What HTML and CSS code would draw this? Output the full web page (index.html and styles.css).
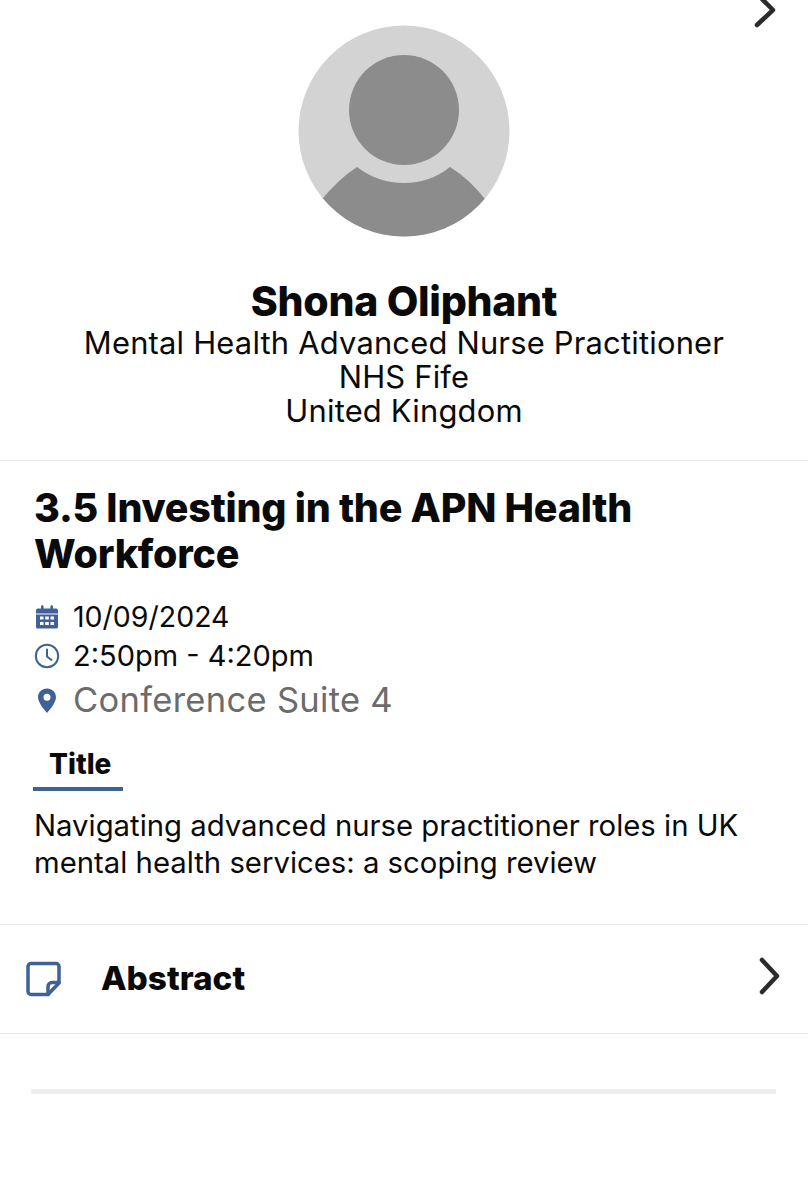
FILE: index.html
```html
<!DOCTYPE html>
<html lang="en">
<head>
  <meta charset="UTF-8">
  <meta name="viewport" content="width=device-width, initial-scale=1.0">
  <title>Shona Oliphant</title>
  <link rel="stylesheet" href="styles.css">
</head>
<body>
  <!-- Speaker -->
  <header class="speaker">
    <svg class="next-top" width="40" height="32" viewBox="0 0 40 32" fill="none">
      <path d="M5 -6 L21 10 L5 25" stroke="#2b2b2b" stroke-width="4.500" stroke-linecap="round" stroke-linejoin="round"/>
    </svg>
    <svg class="avatar" width="212" height="212" viewBox="0 0 212 212">
      <clipPath id="avatar-clip"><circle cx="106" cy="106" r="105.5"/></clipPath>
      <circle cx="106" cy="106" r="105.5" fill="#d3d3d3"/>
      <circle cx="106" cy="85" r="55" fill="#8c8c8c"/>
      <path clip-path="url(#avatar-clip)" d="M20 179 Q40 154 59 142 Q80 158 106 158 Q132 158 152 142 Q172 154 191 179 V212 H20 Z" fill="#8c8c8c"/>
    </svg>
    <h1 class="name">Shona Oliphant</h1>
    <p class="line">Mental Health Advanced Nurse Practitioner</p>
    <p class="line">NHS Fife</p>
    <p class="line">United Kingdom</p>
  </header>

  <!-- Session -->
  <section class="session">
    <h2 class="session-title">3.5 Investing in the APN Health Workforce</h2>
    <div class="meta meta-date">
      <svg class="meta-icon" width="26" height="26" viewBox="0 0 26 26">
        <path d="M2 6.5a2 2 0 0 1 2-2h3V2.5a1.3 1.3 0 0 1 2.6 0v2h6.8v-2a1.3 1.3 0 0 1 2.6 0v2h3a2 2 0 0 1 2 2v3H2z" fill="#3f6198"/>
        <path fill-rule="evenodd" d="M2 10.5h22V23a1.5 1.5 0 0 1-1.5 1.5h-19A1.5 1.5 0 0 1 2 23z M6 12.5v3h3.5v-3z M11.2 12.5v3h3.6v-3z M16.5 12.5v3H20v-3z M6 18v3h3.5v-3z M11.2 18v3h3.6v-3z M16.5 18v3H20v-3z" fill="#3f6198"/>
      </svg>
      <span>10/09/2024</span>
    </div>
    <div class="meta meta-time">
      <svg class="meta-icon" width="26" height="26" viewBox="0 0 26 26" fill="none" stroke="#3f6198">
        <circle cx="13" cy="13" r="11.2" stroke-width="2"/>
        <path d="M13 6.5V13.5L17.5 17" stroke-width="2" stroke-linecap="round" stroke-linejoin="round"/>
      </svg>
      <span>2:50pm - 4:20pm</span>
    </div>
    <div class="meta meta-place">
      <svg class="meta-icon" width="26" height="26" viewBox="0 0 26 26">
        <path fill-rule="evenodd" d="M13 1.500C7.900 1.500 4 5.400 4 10.300C4 16.500 13 26 13 26C13 26 22 16.500 22 10.300C22 5.400 18.100 1.500 13 1.500Z M13 6.800A3.500 3.500 0 1 0 13 13.800A3.500 3.500 0 1 0 13 6.800Z" fill="#3f6198"/>
      </svg>
      <span>Conference Suite 4</span>
    </div>
    <div class="tab">Title</div>
    <p class="talk">Navigating advanced nurse practitioner roles in UK mental health services: a scoping review</p>
  </section>

  <!-- Abstract row -->
  <div class="row">
    <svg class="row-icon" width="36" height="36" viewBox="0 0 36 36" fill="none" stroke="#3f6198" stroke-width="3.500" stroke-linejoin="round" stroke-linecap="round">
      <path d="M5 2.500H30A3 3 0 0 1 33 5.500V22L22 33.500H5A3 3 0 0 1 2 30.500V5.500A3 3 0 0 1 5 2.500Z"/>
      <path d="M33 21.500H26A4 4 0 0 0 22 25.500V33.500"/>
    </svg>
    <span class="row-label">Abstract</span>
    <svg class="row-arrow" width="24" height="38" viewBox="0 0 24 38" fill="none">
      <path d="M4 3 L19 19 L4 35" stroke="#2b2b2b" stroke-width="4.500" stroke-linecap="round" stroke-linejoin="round"/>
    </svg>
  </div>

  <div class="bar"></div>
</body>
</html>
```

FILE: styles.css
```css
/* General Styles */
body {
  font-family: "Inter", "Open Sans", sans-serif;
  background: #fff;
  color: #0a0a0a;
  margin: 0;
  padding: 0;
}

h1, h2, p {
  margin: 0;
}

/* Speaker */
.speaker {
  position: relative;
  padding-top: 25px;
  height: 435px;
  text-align: center;
  border-bottom: 1px solid #e8e8e8;
}

.next-top {
  position: absolute;
  top: 0;
  left: 752px;
}

.avatar {
  display: block;
  margin: 0 auto 40px 298px;
}

.name {
  font-size: 41px;
  line-height: 48px;
  font-weight: 800;
  letter-spacing: -0.3px;
  margin-bottom: 1px;
}

.line {
  font-size: 30.9px;
  line-height: 34px;
  letter-spacing: 0.2px;
}

/* Session */
.session {
  padding: 24px 34px 0;
  height: 439px;
  border-bottom: 1px solid #e8e8e8;
}

.session-title {
  font-size: 39.4px;
  line-height: 46px;
  font-weight: 800;
  letter-spacing: -0.2px;
  width: 680px;
  margin-bottom: 20px;
}

.meta {
  display: flex;
  align-items: center;
  gap: 13px;
  font-size: 28.5px;
  line-height: 39px;
}

.meta-time {
  font-size: 29px;
}

.meta-place {
  margin-top: 5px;
  color: #6b6b6b;
  font-size: 34.5px;
  letter-spacing: 0.3px;
}

.tab {
  width: 90px;
  margin-top: 23px;
  margin-left: -1px;
  padding-left: 16px;
  box-sizing: border-box;
  height: 49px;
  line-height: 44px;
  font-size: 28px;
  font-weight: 800;
  border-bottom: 4px solid #3f6198;
}

.talk {
  margin-top: 16px;
  font-size: 29.3px;
  line-height: 37px;
}

/* Abstract row */
.row {
  display: flex;
  align-items: center;
  height: 108px;
  padding-left: 26px;
  border-bottom: 1px solid #e8e8e8;
}

.row-label {
  margin-left: 39px;
  font-size: 33.3px;
  font-weight: 800;
  margin-top: -2px;
}

.row-arrow {
  margin-left: auto;
  margin-right: 26px;
  margin-top: -7px;
}

.bar {
  height: 5px;
  margin: 55px 32px 0 31px;
  background: #eeeeee;
}
```
